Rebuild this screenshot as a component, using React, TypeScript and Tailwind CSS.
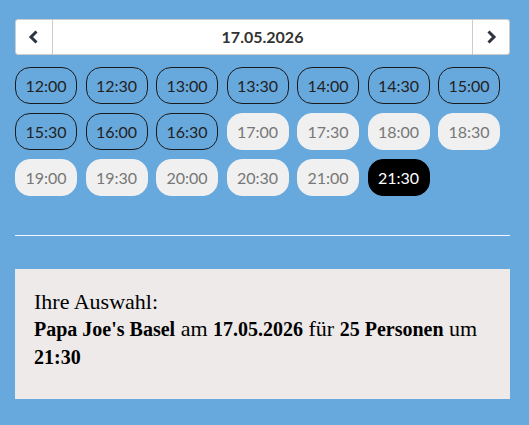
import React from "react";

const slots = [
  "12:00", "12:30", "13:00", "13:30", "14:00", "14:30", "15:00",
  "15:30", "16:00", "16:30", "17:00", "17:30", "18:00", "18:30",
  "19:00", "19:30", "20:00", "20:30", "21:00", "21:30",
];
const available = new Set(["12:00", "12:30", "13:00", "13:30", "14:00", "14:30", "15:00", "15:30", "16:00", "16:30"]);
const selected = "21:30";

const Chevron = ({ dir }: { dir: "left" | "right" }) => (
  <svg width="12" height="14" viewBox="0 0 12 14" className="text-[#2b3440]">
    {dir === "left" ? (
      <path d="M8.5 1.5 L3 7 L8.5 12.5" fill="none" stroke="currentColor" strokeWidth="3" />
    ) : (
      <path d="M3.5 1.5 L9 7 L3.5 12.5" fill="none" stroke="currentColor" strokeWidth="3" />
    )}
  </svg>
);

export default function App() {
  return (
    <div className="min-h-[425px] w-[529px] bg-[#68a9dd] pt-[19px] pl-[15px] font-['Lato','Noto_Sans',sans-serif]">
      <div className="w-[495px]">
        {/* date navigation */}
        <div className="flex h-[36px]">
          <button className="flex w-[38px] items-center justify-center rounded-l-[3px] border border-[#cccccc] bg-white">
            <Chevron dir="left" />
          </button>
          <div className="flex flex-1 items-center justify-center border-y border-[#cccccc] bg-white text-[16px] font-bold text-[#333333]">
            17.05.2026
          </div>
          <button className="flex w-[38px] items-center justify-center rounded-r-[3px] border border-[#cccccc] bg-white">
            <Chevron dir="right" />
          </button>
        </div>

        {/* time slots */}
        <div className="mt-[12px] flex flex-wrap gap-x-[8.5px] gap-y-[9px]">
          {slots.map((t) => {
            const isSel = t === selected;
            const isAvail = available.has(t);
            return (
              <button
                key={t}
                className={
                  isSel
                    ? "flex h-[37px] w-[62px] items-center justify-center rounded-[15px] border border-black bg-black text-[16px] text-white"
                    : isAvail
                    ? "flex h-[37px] w-[62px] items-center justify-center rounded-[15px] border border-[#1a1a1a] text-[16px] text-[#222222]"
                    : "flex h-[37px] w-[62px] items-center justify-center rounded-[15px] border border-[#f0f0f0] bg-[#f0f0f0] text-[16px] text-[#777777]"
                }
              >
                {t}
              </button>
            );
          })}
        </div>

        <div className="mt-[39px] h-px bg-white/90" />

        {/* selection summary */}
        <div className="mt-[33px] h-[130px] bg-[#eeeae9] px-[19px] pt-[19px] text-[22px] leading-[27px] text-black font-['Liberation_Serif','Times_New_Roman',serif]">
          <div>Ihre Auswahl:</div>
          <div>
            <b className="text-[20px]">Papa Joe's Basel</b> am{" "}
            <b className="text-[20px]">17.05.2026</b> für{" "}
            <b className="text-[20px]">25 Personen</b> um{" "}
            <b className="text-[20px]">21:30</b>
          </div>
        </div>
      </div>
    </div>
  );
}
